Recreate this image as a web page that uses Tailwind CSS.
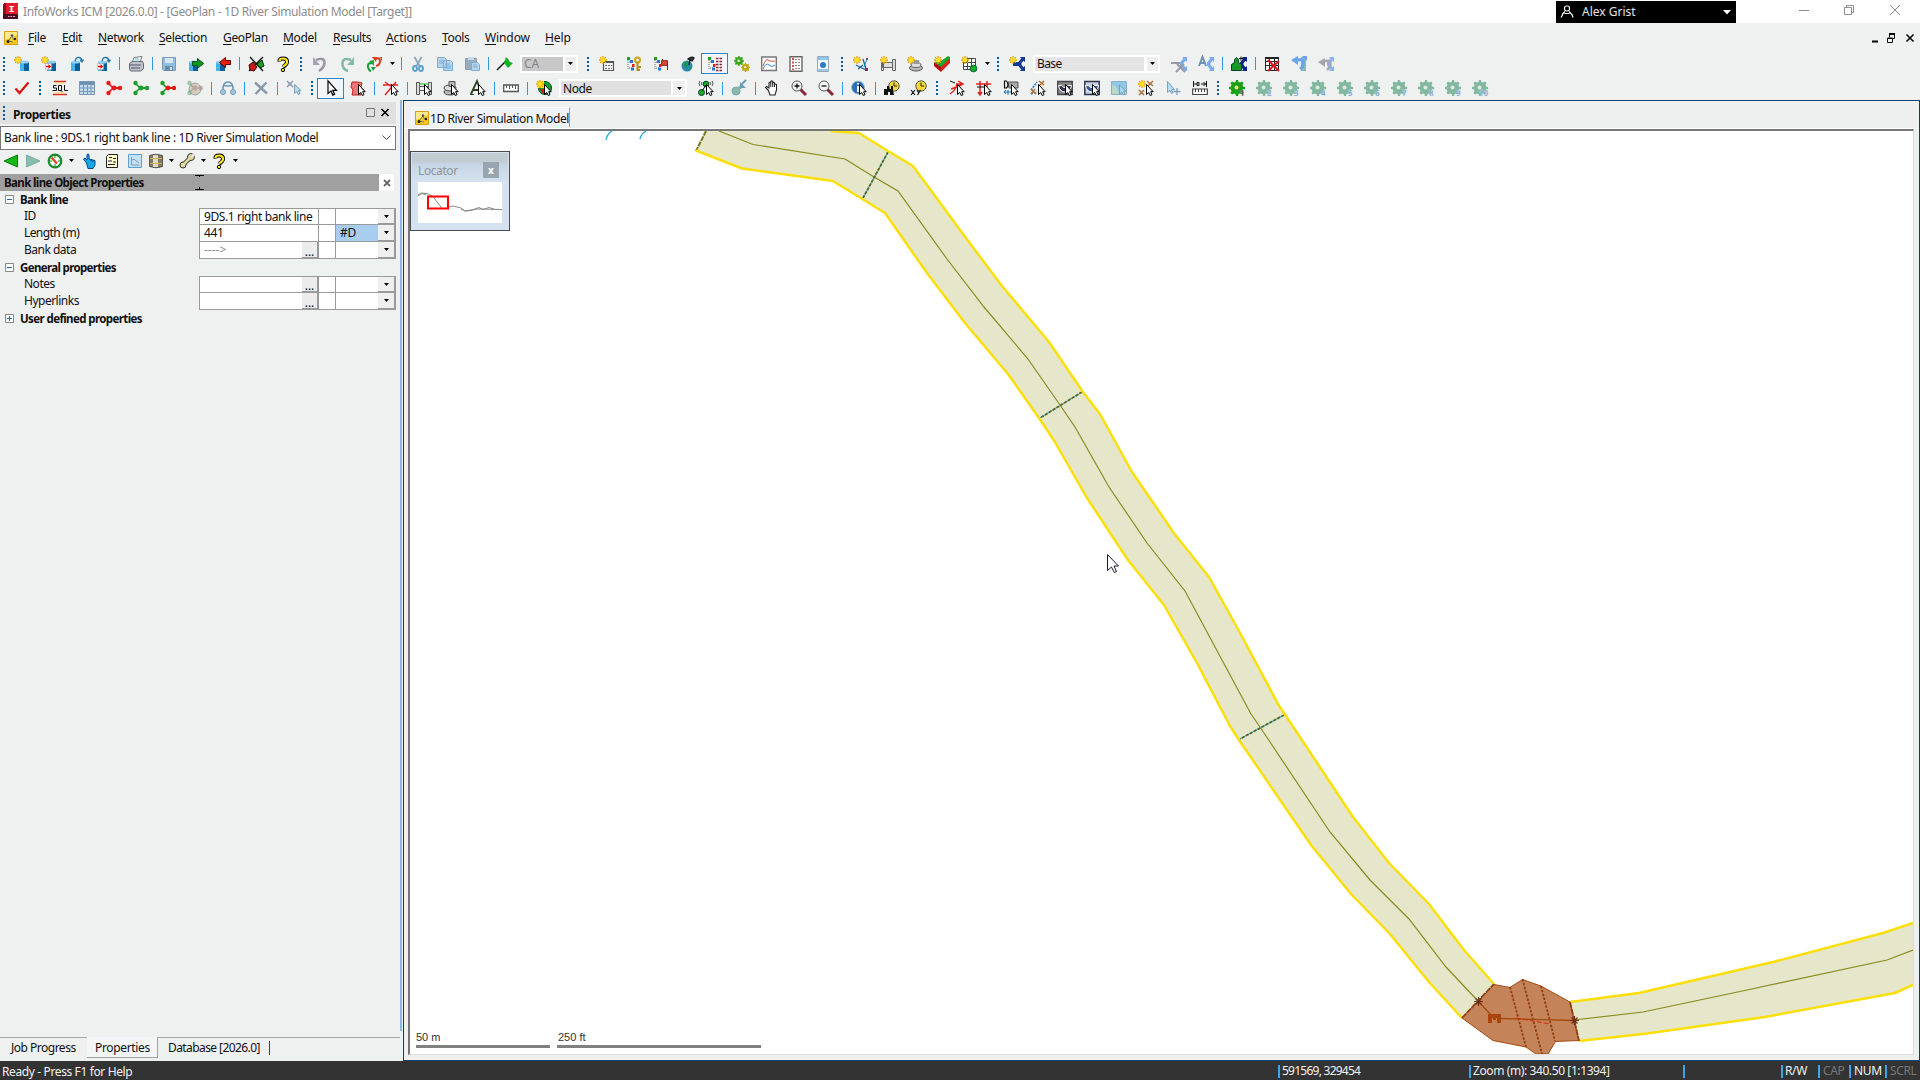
<!DOCTYPE html>
<html lang="en">
<head>
<meta charset="utf-8">
<title>InfoWorks ICM</title>
<script src="https://cdn.jsdelivr.net/npm/@tailwindcss/browser@4"></script>
</head>
<body class="w-[1920px] h-[1080px] overflow-hidden flex flex-col bg-[#eff0f0] text-[12px] leading-none text-[#101010] whitespace-nowrap font-['Noto_Sans','Open_Sans',sans-serif]">

<!-- title bar -->
<header class="h-[23px] shrink-0 bg-white flex items-start">
  <svg class="ml-[3px] mt-[3px] w-[15px] h-4 shrink-0" viewBox="0 0 15 16"><path fill="#e51c2b" d="M1 0h14v14H1z"/><path fill="#8b1020" d="M0 1l3-1v13l-3 1z"/><path fill="#4a0d22" d="M0 11h15v5H0z"/><path fill="#fff" d="M6 3h5v1H9.400v4H11v1H6V8h1.600V4H6z"/><path stroke="#d9b8c0" d="M5 13.500h1.500M7.500 13.500h1.500M10 13.500h2"/></svg>
  <div class="ml-[5px] mt-[6px] w-[1533px] shrink-0 text-[#8c8c8c] tracking-[-0.34px]">InfoWorks ICM [2026.0.0] - [GeoPlan - 1D River Simulation Model [Target]]</div>
  <div class="mt-px w-[180px] h-[22px] shrink-0 bg-black text-[#e4e4e4] flex items-center">
    <svg class="ml-1 w-[14px] h-[14px]" viewBox="0 0 14 14" fill="none" stroke="#fff" stroke-width="1.200"><rect x="4.500" y="1" width="5" height="5" rx="2"/><path d="M5 6.500L2.500 9v1L1 12.500M9 6.500l3 3 1 3M4.500 8.500h5"/></svg>
    <span class="ml-2 grow">Alex Grist</span>
    <svg class="mr-[5px] w-2 h-[5px]" viewBox="0 0 8 5"><path fill="#fff" d="M0 0h8L4 4.500z"/></svg>
  </div>
  <svg class="ml-[50px] w-[120px] h-[22px] shrink-0" viewBox="0 0 120 22" fill="none" stroke="#8c8c8c"><path d="M13 10.500h10M58.500 7.500h7v7h-7zM60.500 7V5.500h7v7H66M104 5l10 10M114 5l-10 10"/></svg>
</header>

<!-- menu bar -->
<nav class="h-[29px] shrink-0 flex items-center">
  <svg class="ml-1 w-[14px] h-[14px] shrink-0" viewBox="0 0 14 14"><use href="#doc"/></svg>
  <div class="ml-[10px] flex grow tracking-[-0.35px]">
    <span class="w-[34px]"><u class="underline-offset-2">F</u>ile</span><span class="w-[36px]"><u class="underline-offset-2">E</u>dit</span><span class="w-[61px]"><u class="underline-offset-2">N</u>etwork</span><span class="w-[64px]"><u class="underline-offset-2">S</u>election</span><span class="w-[60px]"><u class="underline-offset-2">G</u>eoPlan</span><span class="w-[50px]"><u class="underline-offset-2">M</u>odel</span><span class="w-[53px]"><u class="underline-offset-2">R</u>esults</span><span class="w-[56px] tracking-[-0.1px]"><u class="underline-offset-2">A</u>ctions</span><span class="w-[43px]"><u class="underline-offset-2">T</u>ools</span><span class="w-[60px] tracking-[-0.1px]"><u class="underline-offset-2">W</u>indow</span><span class="tracking-[-0.1px]"><u class="underline-offset-2">H</u>elp</span>
  </div>
  <svg class="w-[50px] h-[14px]" viewBox="0 0 50 14" fill="none" stroke="#000"><path stroke-width="2" d="M2 10.500h6M19 3h6"/><path d="M17.500 7.500h5v4h-5zM17.500 7h5M19.500 6V3.500h5v4H23"/><path stroke-width="1.500" d="M36.500 3.500l7 7M43.500 3.500l-7 7"/></svg>
</nav>

<div class="h-[24px] shrink-0 flex items-center pb-px" data-bar></div>
<div class="h-[24px] shrink-0 flex items-center" data-bar2></div>

<main class="grow flex min-h-0">
  <!-- properties panel -->
  <section class="w-[400px] shrink-0 flex flex-col pt-[2px] pr-1">
    <div class="h-[22px] shrink-0 bg-[#e0e0e0] flex items-center">
      <svg class="ml-[2px] w-1 h-4" viewBox="0 0 4 16"><path stroke="#0c5a96" stroke-width="2" stroke-dasharray="2 2" d="M2 1v15"/></svg>
      <span class="ml-[7px] pt-[3px] grow font-bold tracking-[-0.45px]">Properties</span>
      <svg class="mr-[6px] w-6 h-3" viewBox="0 0 24 12" fill="none"><path stroke="#777" d="M.5 1.500h8v8h-8z"/><path stroke="#000" stroke-width="1.600" d="M15.500 2l7 7M22.500 2l-7 7"/></svg>
    </div>
    <div class="mt-[2px] h-[24px] shrink-0 bg-white border border-[#777] flex items-center">
      <span class="ml-[3px] grow tracking-[-0.37px]">Bank line : 9DS.1 right bank line : 1D River Simulation Model</span>
      <svg class="mr-1 w-[9px] h-[6px]" viewBox="0 0 9 6"><path fill="none" stroke="#444" d="M.5.500l4 4 4-4"/></svg>
    </div>
    <div class="h-[24px] shrink-0 flex items-center pb-[3px]" data-pbar></div>
    <div class="h-[17px] shrink-0 flex">
      <div class="w-[379px] bg-[#a0a0a0] flex items-center font-bold">
        <span class="ml-1 w-[191px] text-[11.5px] tracking-[-0.62px]">Bank line Object Properties</span>
        <svg class="w-[9px] h-[17px]" viewBox="0 0 9 17" fill="none" stroke="#000"><path d="M0 1.500h9M4.500 1v2M0 15.500h9M4.500 13v3"/></svg>
      </div>
      <div class="w-[15px] bg-white flex items-center justify-center"><svg class="w-2 h-2 mt-px" viewBox="0 0 8 8"><path stroke="#666" stroke-width="1.800" d="M1 1l6 6M7 1L1 7"/></svg></div>
    </div>
    <div class="flex">
      <div class="w-[199px] flex flex-col tracking-[-0.5px]">
        <div class="h-[17px] flex items-center font-bold text-[11.5px] tracking-[-0.6px]"><svg class="ml-[5px] mr-[6px] w-[9px] h-[9px]" viewBox="0 0 9 9"><path fill="#fff" stroke="#888" d="M.5.500h8v8h-8z"/><path stroke="#2868a8" d="M2 4.500h5"/></svg>Bank line</div>
        <div class="h-[17px] pb-px pl-6 flex items-center">ID</div>
        <div class="h-[17px] pb-px pl-6 flex items-center tracking-[-0.6px]">Length (m)</div>
        <div class="h-[17px] pb-px pl-6 flex items-center">Bank data</div>
        <div class="h-[17px] flex items-center font-bold text-[11.5px] tracking-[-0.65px]"><svg class="ml-[5px] mr-[6px] w-[9px] h-[9px]" viewBox="0 0 9 9"><path fill="#fff" stroke="#888" d="M.5.500h8v8h-8z"/><path stroke="#2868a8" d="M2 4.500h5"/></svg>General properties</div>
        <div class="h-[17px] pb-px pl-6 flex items-center">Notes</div>
        <div class="h-[17px] pb-px pl-6 flex items-center">Hyperlinks</div>
        <div class="h-[17px] flex items-center font-bold text-[11.5px] tracking-[-0.6px]"><svg class="ml-[5px] mr-[6px] w-[9px] h-[9px]" viewBox="0 0 9 9"><path fill="#fff" stroke="#888" d="M.5.500h8v8h-8z"/><path stroke="#2868a8" d="M2 4.500h5M4.500 2v5"/></svg>User defined properties</div>
      </div>
      <div class="w-[197px] flex flex-col pt-[17px]">
        <div class="border-t border-l border-[#9a9a9a]" data-cells="id len bank"></div>
        <div class="mt-[17px] border-t border-l border-[#9a9a9a]" data-cells="notes links"></div>
      </div>
    </div>
    <div class="grow"></div>
    <div class="h-[24px] shrink-0 flex -mr-1 tracking-[-0.5px]">
      <div class="w-[87px] h-[21px] border-t border-[#a8a8a8] flex items-center pl-[11px]">Job Progress</div>
      <div class="w-[71px] h-[21px] bg-[#f3f5f7] border-b border-r border-[#a0a0a0] flex items-center pl-2 pt-px tracking-[-0.35px]">Properties</div>
      <div class="grow h-[21px] border-t border-[#a8a8a8] flex items-center pl-[10px] tracking-[-0.58px]">Database [2026.0]<span class="ml-[9px] w-px h-[14px] bg-[#0a4f86]"></span></div>
    </div>
  </section>
  <div class="w-[2px] mr-px mb-[30px] bg-[#85bde8]"></div>

  <!-- map window -->
  <section class="grow flex flex-col border border-[#0a3f6e] bg-[#eeefef]">
    <div class="h-[28px] shrink-0 flex items-end border-b border-white">
      <div class="ml-[7px] w-[159px] h-[20px] mb-px bg-[#eff3f8] border-t border-l border-white border-r border-r-[#999] flex items-center">
        <svg class="ml-[3px] w-[14px] h-[14px] shrink-0" viewBox="0 0 14 14"><use href="#doc"/></svg><span class="ml-px pt-[3px] tracking-[-0.4px]">1D River Simulation Model</span>
      </div>
    </div>
    <div class="relative ml-1 mr-[5px] mb-[5px] grow border-t-2 border-l-2 border-[#777] border-r border-b border-r-[#ddd] border-b-[#ddd] bg-white overflow-hidden">
      <svg class="block w-[1503px] h-[923px]" viewBox="410 131 1503 923" fill="none">
        <g fill="#e6e6cb">
          <path d="M706 131H830L859 133 888 151 913 166 963 234 1002 286 1049 342 1083 392 1100 414 1132 472 1165 520 1173 532 1209 577 1239 631 1278 704 1286 716 1353 817 1389 863 1429 904 1464 950 1494 984 1462 1018 1429 982 1390 934 1351 894 1311 845 1239 740 1230 726 1197 663 1164 605 1128 560 1087 498 1055 442 1039 418 1008 374 965 323 927 273 885 213 833 181 742 168.500 696 150.500z"/>
          <path d="M1570 1002L1639 993 1773 962 1883 933 1913 923V985L1895 993 1765 1017 1647 1033.500 1579 1041z"/>
        </g>
        <g stroke="#8a8a1e" stroke-width="1.200">
          <path d="M719 131L753 144.500 845 159 874 177 898 191 947 259 984 307 1028 359 1060 405 1075 427 1109 487 1147 543 1185 591 1251 714 1260 727 1330 832 1370 880 1409 919 1446 967 1478 1001"/>
          <path d="M1574 1020L1643 1012 1747 990 1887 960 1913 950"/>
        </g>
        <g stroke="#38b4d4" stroke-width="1.400"><path d="M888 152L863 198M1082 392L1040 418M1284 715L1240 739"/><path stroke="#22a7dc" stroke-width="1.300" d="M612 131Q607 134 606 140M646 131Q641 134 640 139"/></g>
        <g stroke="#66661a" stroke-width="1.800" stroke-dasharray="3 1.500"><path d="M888 152L863 198M1082 392L1040 418M1284 715L1240 739"/><path stroke="#77771c" stroke-width="2" stroke-dasharray="5 1" d="M706 131L696 151"/></g>
        <g stroke="#fbdf0a" stroke-width="2.500" stroke-linejoin="round">
          <path d="M830 131L859 133 888 151 913 166 963 234 1002 286 1049 342 1083 392 1100 414 1132 472 1165 520 1173 532 1209 577 1239 631 1278 704 1286 716 1353 817 1389 863 1429 904 1464 950 1494 984"/>
          <path d="M696 150.500L742 168.500 833 181 885 213 927 273 965 323 1008 374 1039 418 1055 442 1087 498 1128 560 1164 605 1197 663 1230 726 1239 740 1311 845 1351 894 1390 934 1429 982 1462 1018"/>
          <path d="M1570 1002L1639 993 1773 962 1883 933 1913 923M1579 1041L1647 1033.500 1765 1017 1895 993 1913 985"/>
        </g>
        <path fill="#c58359" stroke="#a54a10" d="M1494 984.500L1510 987.500 1522.500 979.500 1541 986 1570 1002 1579 1040.500 1555.500 1041.500 1548 1054H1536L1526 1047 1493 1040.500 1462 1018z"/>
        <g stroke="#8f3f10" stroke-width="1.800" stroke-dasharray="2.500 1.500"><path d="M1510 987L1526 1047M1522.500 979L1542 1054M1541 986L1555 1041"/><path stroke-dasharray="6 1" d="M1462 1018L1494 984M1570 1002L1579 1041"/></g>
        <path stroke="#a54a10" stroke-width="1.300" d="M1478 1001L1491 1015M1500 1018.500L1574 1020.500"/>
        <path stroke="#cf2a12" stroke-dasharray="5 2" d="M1516 1018L1550 1024"/>
        <path fill="#a8440c" d="M1488 1014h13v9h-4v-5h-1v2h-3v-2h-1v5h-4z"/>
        <path stroke="#6b3018" stroke-width="1.200" d="M1478.500 997v9M1474 1001.500h9M1475.500 998.500l6 6M1481.500 998.500l-6 6M1574.500 1016v9M1570 1020.500h9M1571.500 1017.500l6 6M1577.500 1017.500l-6 6"/>
        <path stroke="#808080" stroke-width="3" d="M416 1046.500h134M557 1046.500h204"/>
        <path fill="#fff" stroke="#1a1a28" d="M1107.500 554.500V570.500L1111.500 567 1114.300 572.500 1116.500 571.500 1114 566H1118.500z"/>
      </svg>
      <div class="absolute left-[6px] top-[900px] text-[11px] leading-[13px] text-[#333] font-['Liberation_Sans',sans-serif]">50 m</div>
      <div class="absolute left-[148px] top-[900px] text-[11px] leading-[13px] text-[#333] font-['Liberation_Sans',sans-serif]">250 ft</div>
      <!-- locator palette -->
      <div class="absolute left-0 top-[20px] w-[100px] h-[80px] border border-[#4a4a50] bg-[#d5e2f0] p-px flex flex-col">
        <div class="h-[29px] flex items-end bg-linear-to-b from-[#c2ccd3] from-30% via-[#c8d5e5] via-40% to-[#d5e2f0] text-[#8c949c]">
          <span class="ml-[6px] mb-[5px] grow tracking-[-0.4px]">Locator</span>
          <span class="mb-[4px] mr-[9px] w-4 h-4 bg-[#98a5ae] text-white text-[10px] font-bold flex items-center justify-center pb-px">x</span>
        </div>
        <svg class="ml-[6px] w-[84px] h-[41px] bg-white" viewBox="418 182 84 41" fill="none"><path stroke="#888" d="M418 195l3-2 6 .5 6 3 9 12M449 207l4-1 8 2 4 3 12-2 25 .5M418 196l4-2.500 4 1.500M461 209l4 2 6-.5 8-3 4 2 6-2 6 2h7"/><path stroke="#f00" stroke-width="2" d="M428 196.500h20v12h-20z"/></svg>
      </div>
    </div>
  </section>
</main>

<!-- status bar -->
<footer class="h-[19px] pt-[2px] shrink-0 bg-[#333] text-[#f2f2f2] flex items-center tracking-[-0.38px]">
  <span class="w-[1278px] pl-[2px]">Ready - Press F1 for Help</span>
  <span class="w-[191px] border-l-2 border-[#3fa4e0] h-[13px] pl-[2px] tracking-[-0.75px]">591569, 329454</span>
  <span class="w-[214px] border-l-2 border-[#3fa4e0] h-[13px] pl-[2px] tracking-[-0.4px]">Zoom (m): 340.50 [1:1394]</span>
  <span class="w-[98px] border-l-2 border-[#3fa4e0] h-[13px]"></span>
  <span class="w-[37px] border-l-2 border-[#3fa4e0] h-[13px] pl-[2px]">R/W</span>
  <span class="w-[31px] border-l-2 border-[#3fa4e0] h-[13px] pl-[3px] text-[#777]">CAP</span>
  <span class="w-[36px] border-l-2 border-[#3fa4e0] h-[13px] pl-[3px]">NUM</span>
  <span class="border-l-2 border-[#3fa4e0] h-[13px] pl-[3px] text-[#777]">SCRL</span>
</footer>

<svg class="hidden"><defs>
<g id="doc"><path fill="#f7c81c" stroke="#d8a010" d="M.5.500h13v13H.5z"/><path fill="#ffe98a" d="M1 1h12v3L1 9z"/><path stroke="#777" d="M4 10l4-5 2 4 2-2M4 10l5 1" fill="none"/><circle cx="4" cy="10.500" r="1.500" fill="#222"/><circle cx="8" cy="4.500" r="1.300" fill="#555"/><circle cx="11" cy="8" r="1.200" fill="#222"/></g>
</defs></svg>

<script>
// shared icon pieces, drawn on a 16 x 16 grid
const cur = '<path fill="#fff" stroke="#000" d="M8.500 4.500v10l2.300-2 1.400 3 1.800-.8-1.400-3h2.600z"/>';
const star = '<path stroke="#e8a000" stroke-width="1.300" d="M4 0v8M0 4h8M1.200 1.200l5.600 5.600M6.800 1.200L1.200 6.800"/><circle cx="4" cy="4" r="2.300" fill="#ffe020"/>';
const db = '<path fill="#0a5f98" d="M6 6h9v9H6z"/><path fill="#48b4ea" d="M6 6h4v9H6z"/><ellipse cx="10.500" cy="6" rx="4.500" ry="1.500" fill="#8fd0f2"/>';
const inArrow = '<path fill="#fff" stroke="#999" stroke-width=".5" d="M4.500 7.500h6v6h-6z"/><path fill="#e00" d="M5 9.800h2.500V8l2.700 2.500L7.500 13v-1.800H5z"/>';
const hook = '<path fill="none" stroke="#2a78b0" stroke-width="1.300" d="M7 5q1-4 4-3.500T14 6M12 4l2 2 1.500-2.500"/>';
const net = (a, b) => `<path stroke="${b}" stroke-width="2" d="M7 8h7"/><path stroke="${a}" stroke-width="1.600" d="M2 3l5 5-5 5"/><circle cx="2.500" cy="3" r="2.200" fill="${a}"/><circle cx="2.500" cy="13" r="2.200" fill="${a}"/><circle cx="8" cy="8" r="2.400" fill="${b}"/><circle cx="14" cy="8" r="2.200" fill="${b}"/>`;
const tree = '<path fill="none" stroke="#777" stroke-dasharray="1 1" d="M2 2v11M3 6h4M3 12h4"/><path fill="#18a028" d="M1 1h3v3H1z"/><path fill="#2878d8" d="M4 4h3v3H4z"/><path fill="#d82020" d="M6 8h2.500v3H6z"/><path fill="#2878d8" d="M5 11.500h3v3H5z"/>';
const gearPath = 'M7 0h2l.5 2 1.500.6L13 1.500 14.500 3l-1 2 .6 1.500 2 .5v2l-2 .5-.6 1.500 1 2-1.500 1.500-2-1-1.500.6L9 16H7l-.5-2-1.500-.6-2 1L1.500 13l1-2L1.900 9.500 0 9V7l1.900-.5L2.500 5l-1-2L3 1.500l2 1.100L6.500 2z';
const gear = (c, k) => `<path fill="${c}" d="${gearPath}"/><circle cx="7.500" cy="7.500" r="2" fill="${k}"/>`;
const clock = '<circle cx="10" cy="6" r="5.200" fill="#f4d83a" stroke="#555"/><path fill="none" stroke="#222" d="M10 2.500V6h3"/>';
const box = (bg, w, f) => `<path fill="${bg}" stroke="${f}" stroke-width="1.500" d="M.8 1.500h14.400v13H.8z"/><path fill="${w}" stroke="#fff" d="M1.500 5.500h3q1 2 3.500 2t3.500-2h3q-1 6.500-6.500 6.500T1.500 5.500z"/>`;
const lens = s => `<path stroke="#8a2838" stroke-width="3" d="M9.500 9.500L15 15"/><circle cx="6" cy="6" r="5" fill="#f4f4f4" stroke="#555"/><path stroke="#111" stroke-width="1.300" d="${s}"/>`;
const share = c => `<path fill="${c}" d="M16 1v5l-1.500-1.300L12.500 7v2l2 2.300L16 10v5h-5l1.300-1.500L9 9.500v-3l3.300-4L11 1z"/>`;

const I = {
 newdb: db + star, newdbin: db + inArrow + star,
 opendb: '<g transform="translate(-3)">' + db + '</g>' + hook,
 opendbin: '<g transform="translate(-3)">' + db + '</g><g transform="translate(-2)">' + inArrow + '</g>' + hook,
 print: '<path fill="#fff" stroke="#777" d="M6 1.500l8-1-2 6H4z"/><path fill="#bcc4c8" stroke="#667" d="M1.500 7.500l3-2h10l1 2v5l-3 2.500H2.500l-1-2z"/><path stroke="#556" d="M2 9h11M3 12h9"/><path stroke="#6ab4e0" d="M7 3h4M6.500 5h4"/>',
 save: '<path fill="#8fbfe0" stroke="#7a9ab8" d="M1.500 1.500h13v13h-12l-1-1z"/><path fill="#d8e8f2" d="M4 2h8v5H4z"/><path fill="#6a8ba8" d="M4 10h8v5H4z"/><path fill="#dde" d="M9 11h2v3H9z"/>',
 out: '<g transform="translate(-5)">' + db + '</g><path fill="#0a9a18" stroke="#052" d="M4.500 5.500h5v-3l6 5-6 5v-3h-5z"/>',
 in: '<g transform="translate(-5)">' + db + '</g><path fill="#e8200c" stroke="#600" d="M15.500 4.500h-5v-3l-6 5 6 5v-3h5z"/>',
 plug: '<path stroke="#111" stroke-width="1.300" d="M1 15l14-14M2 1l13 14"/><path fill="#c81818" stroke="#400" d="M1 9l4-3 4 5-3 4-4-1z"/><path fill="#18a020" stroke="#030" d="M9 8l5-4 2 6-4 2z"/>',
 help: '<path fill="none" stroke="#000" stroke-width="4" d="M4.500 5.500Q4 2.500 8 2.500t4 3-4 5.500"/><path fill="none" stroke="#ffe61c" stroke-width="2.200" d="M4.500 5Q4.500 2.500 8 2.500t4 2.800-4 5.200"/><circle cx="8" cy="14" r="1.700" fill="#ffe61c" stroke="#000"/>',
 undo: '<path fill="none" stroke="#9a95a8" stroke-width="2.500" d="M4 4q8-3 8.500 2T7 15"/><path fill="#a8a2b4" d="M1 1v8h7z"/>',
 redo: '<path fill="none" stroke="#82b8a8" stroke-width="2.500" d="M12 4Q4 1 3.500 7T9 15"/><path fill="#86bcab" d="M15 1v8H8z"/>',
 redos: '<path fill="none" stroke="#1d9a38" stroke-width="2" d="M6 7q-5 0-4 4t3 4"/><path fill="#1da040" d="M3 5l5-1v6zM5 11h5l-3 4z"/><path fill="none" stroke="#d83c20" stroke-width="2" d="M9 3q5-2 5 2t-4 5"/><path fill="#d84020" d="M6 1l5 0-1 5zM14 1h2v5z"/>',
 cut: '<path stroke="#8aa8bc" stroke-width="1.800" d="M4.500 1l5 9M11.500 1l-5 9"/><g fill="none" stroke="#5a9fd0" stroke-width="1.800"><ellipse cx="5" cy="12.500" rx="2" ry="2.500"/><ellipse cx="11" cy="12.500" rx="2" ry="2.500"/></g>',
 copy: '<path fill="#b8d4ea" stroke="#7aaed4" d="M.5 1.500h7l2 2v8h-9zM6.500 4.500h7l2 2v8h-9z"/><path stroke="#7aaed4" d="M2 5h4M2 7h4M8 8h5M8 10h6M8 12h6"/>',
 paste: '<path fill="#98aec0" stroke="#8a9eae" d="M1.500 2.500h11v11h-11z"/><path fill="#c8d8e4" d="M4 1h6v3H4z"/><path fill="#b8d4ea" stroke="#7aaed4" d="M7.500 6.500h6l2 2v6h-8z"/><path stroke="#7aaed4" d="M9 9h4M9 11h5"/>',
 flag: '<path stroke="#111" stroke-width="1.500" d="M0 14L11 3"/><path fill="#10b020" d="M9 1l4 5 3 1-5 5-4-5z"/>',
 cal: '<path fill="#f4f4f4" stroke="#555" stroke-width="1.200" d="M4.500 5.500h10v9h-10z"/><path stroke="#555" stroke-width="2" d="M4 6h11"/><path stroke="#666" stroke-dasharray="2 1" d="M6 9.500h7M6 12.500h7"/>' + star,
 tkey: tree + '<circle cx="11.500" cy="4" r="2.500" fill="none" stroke="#d0a418" stroke-width="2"/><path stroke="#b88a10" stroke-width="2" d="M11.500 6v9M12 11h3M12 14h2"/>',
 tflag: tree + '<path fill="#d84830" stroke="#903828" d="M8.500 4.500l6 0v5h-6z"/><path stroke="#603028" d="M14.500 5v9M9.500 3v2"/>',
 globe: '<circle cx="7" cy="10" r="5.500" fill="#2a8ab0"/><path fill="#18984a" d="M3 8l4-3 2 3-3 4zM9 11l3-1-2 4z"/><path stroke="#111" stroke-width="1.300" d="M9 9l1-6M8 3q4-3 6-1l-2 3z" fill="#444"/>',
 tbin: tree + '<path stroke="#8a2a30" stroke-width="1.600" stroke-dasharray="2.500 1" d="M9 2.500h6.500M9 5.500h6.500M9 8.500h6.500M9 11.500h6.500M9 14.500h6.500"/>',
 gears: `<g transform="scale(.62)">${gear('#3aa818', '#f0f0f0')}</g><g transform="translate(7 7) scale(.56)">${gear('#c0a818', '#f0f0f0')}</g>`,
 chart: '<path fill="#fff" stroke="#777" stroke-width="1.400" d="M.7 1h14.600v13.500H.7z"/><path fill="none" stroke="#e05038" d="M2 10q3-8 5-6t7 1"/><path fill="none" stroke="#3a80c8" d="M2 13q3-7 6-4t6 0"/>',
 list: '<path fill="#fff" stroke="#666" stroke-width="1.400" d="M2 .700h12v14.500H2z"/><path stroke="#d02020" stroke-width="1.600" stroke-dasharray="2 1.500" d="M5 2v12"/><path stroke="#888" stroke-dasharray="2 1" d="M7 3.500h6M7 6.500h6M7 9.500h6M7 12.500h6"/>',
 page: '<path fill="#f4f8fc" stroke="#99a8b4" d="M2.500.500h11v15h-11z"/><path fill="#8cc8ec" d="M3 1h10v3H3z"/><circle cx="8" cy="9" r="3" fill="#2a7ac8"/><path fill="#9cc8e8" d="M3 13h10v2H3z"/>',
 nlink: '<path stroke="#1a60a0" stroke-width="1.300" d="M3 9l10 5M10 3l3 10M5 13l5-4"/><path fill="#8a3060" d="M12 12h3v3h-3zM13 2h2v2h-2z"/><path stroke="#1b8bbf" d="M14 3l-3 8"/>' + star,
 npipe: '<path fill="#ddd" stroke="#666" d="M2.500 6.500h10v5h-10zM12.500 3.500h3v11h-3zM1.500 6.500h2v8h-2z"/>' + star,
 nman: '<ellipse cx="9" cy="12" rx="6.500" ry="3" fill="#b8b8b8" stroke="#555"/><ellipse cx="9" cy="9" rx="5" ry="2.500" fill="#ddd" stroke="#666"/><path fill="#999" d="M7 4h5v4H7z"/>' + star,
 nsurf: '<path fill="#18a828" d="M0 6l7-1 7-5 2 1v2l-9 9z"/><path fill="#b81010" d="M0 6l7 5v5l-7-6z"/><path fill="#e02020" d="M7 11l9-9v5l-9 9z"/>' + star,
 ngrid: '<path fill="#fff" stroke="#444" d="M2.500 2.500h12v11h-12zM2.500 6.500h12M2.500 10.500h12M6.500 2.500v11M10.500 2.500v11"/><circle cx="12.500" cy="12.500" r="3.300" fill="#18b028" stroke="#063"/>' + star,
 scen: share('#123a98') + '<path fill="#123a98" d="M4 6h6v4H4z"/>' + star,
 sx: share('#7aaeee') + '<path stroke="#9a9aa8" stroke-width="2" d="M0 7h9M6 8l8 8M13 8l-8 8"/>',
 sa: share('#7aaeea') + '<path fill="none" stroke="#7090b0" stroke-width="2" d="M1 10l3.500-9L8 10M2.500 7h4"/>',
 sp: share('#0a2080') + '<path fill="#189828" stroke="#042" d="M.5 14.500v-6l3-2V3.500l2-2 2 2v3l3 2v6z"/><path stroke="#111" d="M8 2.500h4M10 .5v4"/>',
 gx: '<path fill="#fff" stroke="#222" d="M1.500 1.500h13v13h-13zM1 5.500h14M1 9.500h14M5.500 1v14M10.500 1v14"/><path stroke="#222" stroke-width="2" d="M1 2h14"/><path stroke="#e01414" stroke-width="2" d="M4 4l11 11M15 5L4 15"/>',
 su: '<path fill="#88b8b0" d="M10 1h5v14h-5z"/><path fill="none" stroke="#6aa4ec" stroke-width="3" d="M4 5q7-3 8 1t-3 7"/><path fill="#6aa4ec" d="M0 4l7-4v9zM11 0h5v5z"/>',
 sv: share('#8ab4ec') + '<path fill="none" stroke="#a8a4ac" stroke-width="2.500" d="M4 7q6-4 8-1t-3 8"/><path fill="#a8a4ac" d="M0 6l7-4v9z"/>',
 tick: '<path fill="none" stroke="#e01010" stroke-width="2.200" d="M1.500 8.500l4 4.500L14.500 2.500"/>',
 sql: '<path stroke="#e03020" stroke-width="1.300" d="M2 1.500h12M1 14.500h14"/><path stroke="#f0d060" d="M4 3h8M4 13h8"/><path fill="none" stroke="#111" d="M4.500 5.500h-3V8h3v2.500h-4M6.500 5.500h3v5h-3zM8.500 10l2 2M12.500 5v5.500h3.500"/>',
 table: '<path fill="#c4dcee" stroke="#7898b4" d="M.5 1.500h15v13H.5zM.5 4.500h15M.5 8h15M.5 11.500h15M4.500 1.500v13M8.500 1.500v13M12 1.500v13"/><path fill="#6a90b4" d="M1 2h14v2H1z"/>',
 n1: net('#e81818', '#e81818'), n2: net('#18a028', '#18a028'), n3: net('#18a028', '#e81818'),
 n4: '<circle cx="8" cy="9" r="6" fill="#d8ccb8" stroke="#9aa"/><g opacity=".5">' + net('#5a9a70', '#a08898') + '</g>',
 bridge: '<path fill="none" stroke="#6a98b8" stroke-width="1.600" d="M3 9Q3 2 8 2t5 7M3 5q5 2 10 0"/><circle cx="3" cy="12" r="2.500" fill="#a8c8dc" stroke="#6a98b8"/><circle cx="13" cy="12" r="2.500" fill="#a8c8dc" stroke="#6a98b8"/>',
 x: '<path stroke="#8898ac" stroke-width="2.400" d="M2 2.500l12 11M13.500 2.500L2.500 14"/>',
 xsel: '<path stroke="#8898ac" stroke-width="1.500" d="M1 1l6 6M7 1L1 7"/><path fill="#b8d8ec" stroke="#7aa0bc" d="M8.500 4.500v9l2.300-2 1.400 3 1.800-.8-1.400-3h2.600z"/>',
 arrow: '<path fill="#fff" stroke="#000" stroke-width="1.200" d="M5 .8v12.700l3-2.600 1.800 4.200 1.800-.8-1.800-4h3.700z"/>',
 poly: '<path fill="#e87878" stroke="#c02020" d="M2 2l6 0 4 1-1 4 3 3-3 5H2l1-5-2-3z"/>' + cur,
 netr: '<path fill="none" stroke="#e02020" stroke-width="1.400" d="M0 5h15M2 15L13 2M2 2l7 5"/>' + cur,
 pipes: '<path fill="#ddd" stroke="#555" d="M.5 2.500h3v12h-3zM12.500 2.500h3v12h-3z"/><path fill="#eee" stroke="#555" d="M3.500 6.500h9v4h-9z"/><path stroke="#18b028" d="M3 4h10"/>' + cur,
 mans: '<ellipse cx="7" cy="12" rx="6" ry="3" fill="#bbb" stroke="#444"/><ellipse cx="7" cy="8" rx="6" ry="3" fill="#ddd" stroke="#444"/><path fill="#bbb" stroke="#555" d="M6 1.500h6v5H6z"/>' + cur,
 text: '<path fill="none" stroke="#2a4020" stroke-width="1.800" d="M1 14L7 1l3 8M3 10h6"/><path stroke="#2a4020" d="M0 14.500h4"/>' + cur,
 ruler: '<path fill="#fff" stroke="#555" stroke-width="1.300" d="M.7 5h14.600v6.500H.7z"/><path stroke="#555" d="M3.500 5v3M6.500 5v4M9.500 5v3M12.500 5v4"/>',
 theme: '<circle cx="9" cy="8" r="6.500" fill="#18a028" stroke="#042"/><path fill="#c82020" d="M4 9l5 0-2 5z"/><path fill="#ffe820" d="M2 1h6v7H2z"/>' + star + cur,
 trace: '<path fill="none" stroke="#555" d="M2 1q-2 3 0 5M4 2q-1 2 0 3M14 1q2 3 0 5M12 2q1 2 0 3"/><circle cx="8" cy="4" r="2.800" fill="#18b028" stroke="#042"/><circle cx="3.500" cy="12.500" r="3" fill="#18b028" stroke="#042"/><path stroke="#111" d="M8 5l-4 6"/>' + cur,
 ball: '<circle cx="5" cy="11" r="4" fill="#88b8b0" stroke="#7aa"/><circle cx="9" cy="7.500" r="2" fill="#88b8b0"/><path stroke="#6a9cb8" stroke-width="2" d="M15 0l-4 4"/><path fill="#6a9cb8" d="M9 2v6h6z"/>',
 hand: '<path fill="#fff" stroke="#222" stroke-width="1.100" d="M4.500 10.500l-3-3 1-1 2.500 1.500V3q1-1.500 1.800 0V1.500q1-1.200 1.900 0V3q1-1.200 1.800 0v1.500q1.200-1 2 0V10l-1.500 5H6z"/><path stroke="#222" d="M6.800 3v4M8.700 3v4M10.500 4v3"/>',
 zin: lens('M3.500 6h5M6 3.500v5'), zout: lens('M3.500 6h5'),
 info: '<circle cx="7" cy="7.500" r="6.500" fill="#2a70b8" stroke="#a8c0d4"/><path stroke="#fff" stroke-width="2" d="M7 3v1.500M7 6v6"/>' + cur,
 find: clock + '<path fill="#111" d="M0 9h3V6h2v3h2V6h2v4l1 5H6v-3H4v3H0z"/>',
 xy: clock + '<path stroke="#111" stroke-width="1.200" d="M0 10l4 5M4 10l-4 5M6 10l1.500 2.500M9.500 10L6.500 15"/>',
 r1: '<path fill="none" stroke="#e02020" stroke-width="1.400" d="M1 14Q7 10 8 4M7 4l7 0M8 7l-6 2M9 1l5 3-4 2"/><path stroke="#111" d="M1 1l5 2"/>' + cur,
 r2: '<path fill="none" stroke="#e02020" stroke-width="1.500" d="M0 4h15M4 1v13M2 12l2 3 2-3M11 1v6"/><path stroke="#111" d="M1 7h8"/>' + cur,
 r3: '<path fill="#aaa" stroke="#555" d="M5 2h10v6H6z"/><path fill="none" stroke="#111" stroke-width="1.200" d="M1.500 1v7h2q3-3 0-7z"/><path stroke="#1a70b8" d="M1 12h8M3 10l-2 2 2 2M5 10v5"/>' + cur,
 r4: '<path stroke="#1a70c0" stroke-width="1.500" stroke-dasharray="2 1" d="M1 10l6-8M1 14l6-2"/><path stroke="#b07030" stroke-width="1.500" d="M9 1l5 4M14 1L9 6M1 9l5 5M5 9l-4 5"/>' + cur,
 b1: box('#888', '#335', '#444') + cur, b2: box('#c4d0e4', '#3a5a98', '#334') + cur,
 b3: '<path fill="#90c8e8" stroke="#88b0cc" d="M.5 1.500h15v13H.5z"/><path fill="#b8d8c8" d="M1 5q4 0 6 6t8-2v5H1z"/><path fill="#a8d8f0" stroke="#7aa0bc" d="M8.500 5v9l2.300-2 1.400 3 1.800-.8-1.400-3h2.600z"/>',
 b4: '<path stroke="#b07030" stroke-width="1.500" d="M9 1l6 5M15 1L9 7M1 10l5 5M6 10l-5 5"/>' + star + cur,
 csel: '<path fill="#b8dcf0" stroke="#7aa0bc" d="M2.500 1.500v11l2.500-2 1.500 3 1.500-.8-1.500-3h3z"/><path stroke="#7aa0bc" stroke-width="1.300" d="M12 8v7M8.500 11.500h7"/>',
 meas: '<path fill="#fff" stroke="#444" stroke-width="1.200" d="M.7 9h14.600v5.500H.7z"/><path stroke="#444" d="M3.500 9v3M6.500 9v3M9.500 9v3M12.500 9v3"/><path stroke="#111" fill="none" d="M1.500 1v6M14.500 1v6M2 4h3M5 2.500h2v3H5zM9 4h5M11.500 2l2 2-2 2"/>',
 left: '<path fill="#18b818" stroke="#0a7a10" d="M1 8l13.500-6v12z"/>', right: '<path fill="#88bcae" stroke="#7ab0a0" d="M15 8L1.500 2v12z"/>',
 comp: '<circle cx="8" cy="8" r="6.300" fill="#f4fff4" stroke="#1a8a2c" stroke-width="2.200"/><path stroke="#e04018" stroke-width="2.200" d="M4.500 4.500l5.500 6"/><path stroke="#1a8a2c" d="M8 2v3M8 11v3M2 8h3M11 8h3"/>',
 point: '<path fill="#18a8e8" stroke="#054a88" d="M4.500 10L1.500 6l1.500-1 2 2V1.500q1-1 2 0V6l6 1.500V12l-2 3.500H6z"/><path stroke="#054a88" d="M9 6.500v2M11 7v2"/>',
 report: '<path fill="#fffccc" stroke="#222" d="M2.500 3.500l2-2h9v13h-11z"/><path stroke="#222" stroke-width="1.200" d="M5 4.500h3M9 5.500h3M4 8h4M9 9h3M4 11.500h7"/>',
 graph: '<path fill="#c4e2f6" stroke="#58a0d8" d="M1.500 1.500h13v13h-13z"/><path fill="none" stroke="#8898a8" d="M4.500 4v8h8M5 7q3-2 4 1l3 2"/>',
 barrel: '<path fill="#807868" stroke="#555" d="M1.500 2.500q6-2.500 13 0v11q-6 2.500-13 0z"/><path fill="#ddd8c8" d="M5 2h5v12H5z"/><path stroke="#d8b840" d="M2 5.500h12M2 10.500h12"/>',
 wrench: '<path stroke="#333" stroke-width="4.500" d="M4 12l8-8"/><circle cx="12" cy="4" r="3.500" fill="#e0d8a0" stroke="#333"/><circle cx="4" cy="12" r="3" fill="#e0d8a0" stroke="#333"/><path stroke="#e0d8a0" stroke-width="2.500" d="M4 12l8-8"/><path fill="#efefef" d="M12 4l2-4 2 3z"/>'
};
['1','2','3','4','5','6','7','8','9','10'].forEach((n, i) => {
  I['g' + n] = (i ? gear('#82b8a0', '#dfe8e0') : gear('#18a018', '#dfe880')) + `<text x="${i === 9 ? 7 : 11}" y="15.500" font-size="8" font-weight="bold" fill="${i ? '#5f95c0' : '#000'}" stroke="#eef" stroke-width=".3">${n}</text>`;
});
const svg = n => `<svg class="w-4 h-4 shrink-0 overflow-visible" viewBox="0 0 16 16" fill="none">${I[n]}</svg>`;
const tri = '<svg class="w-[5px] h-[3px]" viewBox="0 0 5 3"><path d="M0 0h5L2.500 3z"/></svg>';
const special = {
 '|': '<span class="w-[10px] shrink-0 flex justify-center"><svg class="w-[2px] h-[14px] mr-[1px]" viewBox="0 0 2 14"><path stroke="#0c5a96" stroke-width="2" stroke-dasharray="2 2" d="M1 0v14"/></svg></span>',
 '[': '<span class="w-[8px] shrink-0 flex"><svg class="w-[2px] h-[14px] ml-[3px]" viewBox="0 0 2 14"><path stroke="#0c5a96" stroke-width="2" stroke-dasharray="2 2" d="M1 0v14"/></svg></span>',
 '/': '<span class="w-[6px] shrink-0 flex justify-center"><i class="w-px h-[13px] bg-[#2a9be0]"></i></span>',
 'v': `<span class="w-[11px] shrink-0 flex justify-center">${tri}</span>`,
 '_': '<span class="w-px shrink-0"></span>',
 'CA': `<span class="ml-[2px] mr-[5px] w-[58px] h-[18px] shrink-0 bg-[#c8c8c8] border-2 border-white text-[#808488] flex items-center"><b class="grow pl-[2px] font-normal">CA</b><b class="w-[13px] h-full border-l-2 border-white bg-[#eee] flex items-center justify-center">${tri}</b></span>`,
 'Base': `<span class="ml-[3px] mr-[5px] w-[127px] h-[18px] shrink-0 bg-[#e4e4e4] border-2 border-white flex items-center"><b class="grow pl-[2px] font-normal tracking-[-0.6px]">Base</b><b class="w-[14px] h-full border-l-3 border-white bg-[#eee] flex items-center justify-center">${tri}</b></span>`,
 'Node': `<span class="ml-[2px] mr-[5px] w-[128px] h-[18px] shrink-0 bg-[#e0e0e0] border-2 border-white flex items-center"><b class="grow pt-px pl-[2px] font-normal tracking-[-0.4px]">Node</b><b class="w-[14px] h-full border-l-2 border-white bg-[#eee] flex items-center justify-center">${tri}</b></span>`
};
const bar = s => s.split(' ').map(t => special[t] ||
  (t[0] === '*' ? `<span class="w-[27px] h-[21px] shrink-0 border border-[#2a86cc] bg-[#f3f6f9] flex items-center justify-center">${svg(t.slice(1))}</span>`
                : `<span class="w-[27px] shrink-0 flex justify-center">${svg(t)}</span>`)).join('');
document.querySelector('[data-bar]').innerHTML = bar('[ newdb newdbin opendb opendbin / print / save out in / plug help | undo redo redos v / cut copy paste / flag CA | cal tkey tflag globe *tbin gears chart list page _ | nlink npipe nman nsurf ngrid v | scen Base sx sa / sp / gx su sv');
document.querySelector('[data-bar2]').innerHTML = bar('[ tick | _ sql table n1 n2 n3 n4 / bridge / x / xsel | *arrow poly / netr / pipes mans text / ruler / theme Node trace / ball / hand zin zout / info / find xy | _ r1 r2 r3 r4 b1 b2 b3 b4 csel meas | g1 g2 g3 g4 g5 g6 g7 g8 g9 g10');
document.querySelector('[data-pbar]').innerHTML = [['left',22],['right',22],['comp',21],['v',13],['point',23],['report',22],['graph',23],['barrel',20],['v',11],['wrench',20],['v',12],['help',20],['v',13]]
  .map(([n, w]) => `<span class="shrink-0 flex justify-center" style="width:${w}px">${n === 'v' ? tri : svg(n)}</span>`).join('');

// property grid rows: value, shows an ellipsis button, flag
const rows = { id: ['9DS.1 right bank line', 0, ''], len: ['441', 0, '#D'], bank: ['<span class="text-[#8c8c8c] tracking-normal">----&gt;</span>', 1, ''], notes: ['', 1, ''], links: ['', 1, ''] };
document.querySelectorAll('[data-cells]').forEach(el => {
  el.innerHTML = el.dataset.cells.split(' ').map(k => {
    const [v, dots, flag] = rows[k];
    return `<div class="h-[17px] first:h-[16px] flex bg-white border-b border-[#9a9a9a]">
      <div class="w-[119px] border-r border-[#9a9a9a] flex items-center pl-1 tracking-[-0.42px]"><span class="grow">${v}</span>${dots ? '<span class="w-[16px] h-full bg-[#ececec] border-r border-b border-[#999] flex items-center justify-center pt-1 tracking-normal">...</span>' : ''}</div>
      <div class="w-[17px] border-r border-[#9a9a9a]"></div>
      <div class="w-[42px] flex items-center pl-1 tracking-[-0.3px] ${flag ? 'bg-[#a9cdee]' : ''}">${flag}</div>
      <div class="w-[18px] bg-[#efefef] border-r-2 border-b border-[#999] flex items-center justify-center">${tri}</div></div>`;
  }).join('');
});
</script>
</body>
</html>
